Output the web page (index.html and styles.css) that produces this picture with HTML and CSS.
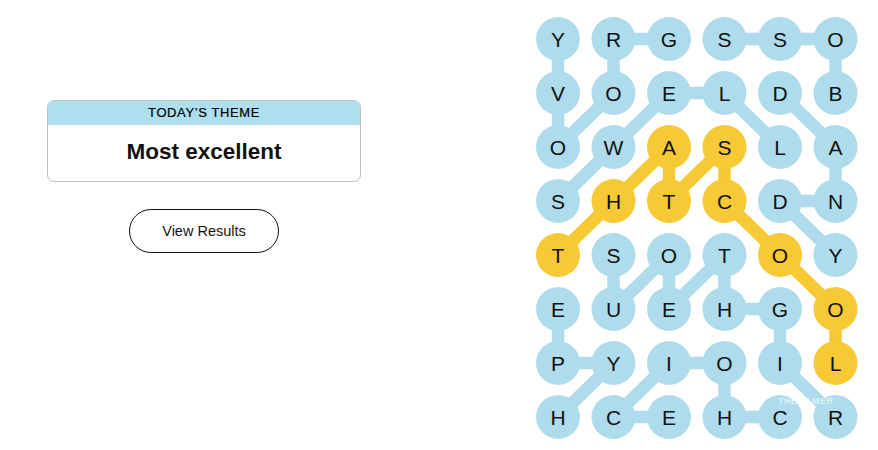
FILE: index.html
```html
<!DOCTYPE html>
<html>
  <head>
    <title>Strands</title>
    <link rel="stylesheet" href="styles.css">
  </head>
  <body>
    <div class="page">
      <div class="side">
        <div class="theme">
          <h2 class="theme_head">Today’s Theme</h2>
          <p class="theme_text">Most excellent</p>
        </div>
        <button class="results_btn">View Results</button>
      </div>

      <div class="board">
        <svg id="grid" width="340" height="450" viewBox="0 0 340 450"></svg>
        <span class="mark">THEGAMER</span>
      </div>
    </div>

    <script>
      var grid = document.getElementById("grid");
      var ns = "http://www.w3.org/2000/svg";

      const letters = [
        "YRGSSO",
        "VOELDB",
        "OWASLA",
        "SHTCDN",
        "TSOTOY",
        "EUEHGO",
        "PYIOIL",
        "HCEHCR",
      ];

      // words as chains of [row, col]
      const words = [
        { gold: false, cells: [[0,2],[0,1],[1,1],[2,0],[1,0],[0,0]] },
        { gold: false, cells: [[1,5],[0,5],[0,4],[0,3]] },
        { gold: false, cells: [[3,0],[2,1],[1,2],[1,3],[2,4]] },
        { gold: false, cells: [[1,4],[2,5],[3,5],[3,4],[4,5]] },
        { gold: false, cells: [[7,5],[6,4],[5,4],[5,3],[4,3],[5,2],[4,2],[5,1],[4,1]] },
        { gold: false, cells: [[7,0],[6,1],[6,0],[5,0]] },
        { gold: false, cells: [[7,4],[7,3],[6,3],[6,2],[7,1],[7,2]] },
        { gold: true, cells: [[4,0],[3,1],[2,2],[3,2],[2,3],[3,3],[4,4],[5,5],[6,5]] },
      ];

      const cx = (c) => 28 + c * 55.5;
      const cy = (r) => 39 + r * 54;

      var gold = {};

      function add(tag, attrs) {
        var el = document.createElementNS(ns, tag);
        for (var k in attrs) el.setAttribute(k, attrs[k]);
        grid.appendChild(el);
        return el;
      }

      words.forEach((w) => {
        for (var i = 1; i < w.cells.length; i++) {
          var a = w.cells[i - 1];
          var b = w.cells[i];
          add("line", {
            x1: cx(a[1]), y1: cy(a[0]), x2: cx(b[1]), y2: cy(b[0]),
            class: w.gold ? "link gold" : "link",
          });
        }
        if (w.gold) w.cells.forEach((c) => (gold[c[0] + "_" + c[1]] = true));
      });

      letters.forEach((row, r) => {
        row.split("").forEach((ch, c) => {
          var on = gold[r + "_" + c];
          add("circle", { cx: cx(c), cy: cy(r), r: 22, class: on ? "dot gold" : "dot" });
          var t = add("text", { x: cx(c), y: cy(r) + 7.5, class: "letter" });
          t.textContent = ch;
        });
      });
    </script>
  </body>
</html>
```

FILE: styles.css
```css
* {
  margin: 0px;
  padding: 0px;
  box-sizing: border-box;
}

body {
  background: white;
  font-family: "Liberation Sans", Arial, sans-serif;
  color: #121212;
}

.page {
  display: flex;
  width: 878px;
  height: 450px;
}

.side {
  width: 408px;
  padding-top: 100px;
  display: flex;
  flex-direction: column;
  align-items: center;
}

.theme {
  width: 314px;
  border: 1px solid #c2c2c2;
  border-radius: 7px;
  overflow: hidden;
  text-align: center;
}

.theme_head {
  background-color: #aedfee;
  height: 24px;
  line-height: 24px;
  font-size: 13px;
  font-weight: normal;
  letter-spacing: 0.6px;
  text-transform: uppercase;
  color: #000;
  -webkit-text-stroke: 0.2px #000;
}

.theme_text {
  height: 56px;
  line-height: 54px;
  font-size: 22.5px;
  font-weight: bold;
}

.results_btn {
  margin-top: 27px;
  width: 150px;
  height: 44px;
  border: 1px solid #121212;
  border-radius: 22px;
  background: white;
  font-family: "Liberation Sans", Arial, sans-serif;
  font-size: 14.5px;
  color: #121212;
}

.board {
  margin-left: 122px;
  position: relative;
}

#grid {
  display: block;
}

.link {
  stroke: #aedcec;
  stroke-width: 12.5;
}

.link.gold {
  stroke: #f7c934;
}

.dot {
  fill: #aedcec;
}

.dot.gold {
  fill: #f7c934;
}

.letter {
  font-family: "Liberation Sans", Arial, sans-serif;
  font-size: 21px;
  fill: #121212;
  text-anchor: middle;
}

.mark {
  position: absolute;
  left: 248px;
  top: 397px;
  font-size: 9px;
  line-height: 9px;
  font-weight: bold;
  letter-spacing: 0.5px;
  color: rgba(255, 255, 255, 0.6);
}
```
